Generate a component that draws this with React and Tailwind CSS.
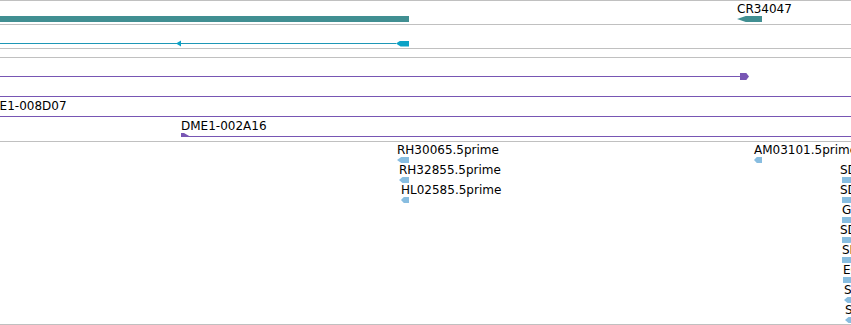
import React from "react";

const leftArrow = "[clip-path:polygon(0_50%,35%_0,100%_0,100%_100%,35%_100%)]";
const rightArrow = "[clip-path:polygon(0_0,70%_0,100%_50%,70%_100%,0_100%)]";

// One glyph on a track row: label on top, then a 7px band for the glyph.
function Feature({ x, w, label, labelClass = "", children }) {
  return (
    <div className="absolute top-0 flex flex-col" style={{ left: x, width: w }}>
      <div className={`mt-[2px] h-[12px] whitespace-nowrap text-[12px] leading-[12px] text-black ${labelClass}`}>
        {label}
      </div>
      <div className="mt-[1px] h-[7px] flex items-center">{children}</div>
    </div>
  );
}

function Row({ children }) {
  return <div className="relative h-[20px] shrink-0">{children}</div>;
}

function Track({ className = "", children }) {
  return (
    <div className={`relative flex flex-col shrink-0 overflow-hidden border-t border-[#c0c0c0] ${className}`}>
      {children}
    </div>
  );
}

// ESTs, grouped by stacking row
const estRows = [
  [
    { name: "RH30065.5prime", x: 397, w: 12, dir: "l" },
    { name: "AM03101.5prime", x: 754, w: 8, dir: "l" },
  ],
  [
    { name: "RH32855.5prime", x: 399, w: 10, dir: "l" },
    { name: "SD09281.5prime", x: 842, w: 14, dir: "r", shift: true },
  ],
  [
    { name: "HL02585.5prime", x: 401, w: 8, dir: "l" },
    { name: "SD24317.5prime", x: 842, w: 14, dir: "r", shift: true },
  ],
  [{ name: "GH13459.5prime", x: 842, w: 14, dir: "r" }],
  [{ name: "SD05962.5prime", x: 842, w: 12, dir: "r", shift: true }],
  [{ name: "SD10573.5prime", x: 842, w: 14, dir: "r" }],
  [{ name: "EC298754.5prime", x: 843, w: 12, dir: "r" }],
  [{ name: "SD07463.5prime", x: 844, w: 10, dir: "l" }],
  [{ name: "SD25873.5prime", x: 845, w: 10, dir: "l" }],
];

export default function App() {
  return (
    <div className="w-[851px] h-[325px] overflow-hidden bg-white flex flex-col font-['DejaVu_Sans',Verdana,sans-serif]">
      {/* gene span */}
      <Track className="h-[24px]">
        <Row>
          <Feature x={0} w={409}>
            <div className="w-full h-[6px] self-start bg-[#418f92]" />
          </Feature>
          <Feature x={737} w={25} label="CR34047">
            <div className={`w-full h-[6px] self-start bg-[#418f92] ${leftArrow}`} />
          </Feature>
        </Row>
      </Track>

      {/* transcript */}
      <Track className="h-[24px]">
        <Row>
          <Feature x={0} w={409}>
            <div className="relative flex-1 h-px bg-[#1e97b6]">
              <svg className="absolute left-[175px] -top-[3px]" width="7" height="7" viewBox="0 0 7 7">
                <polygon points="1,3.5 6,0.5 6,6.5" fill="#0ba2c6" />
              </svg>
            </div>
            <div className={`w-[13px] h-[6px] bg-[#0ba2c6] ${leftArrow}`} />
          </Feature>
        </Row>
      </Track>

      {/* empty track */}
      <Track className="h-[9px]" />

      {/* clones */}
      <Track className="h-[84px]">
        <Row>
          <Feature x={0} w={749}>
            <div className="flex-1 h-px bg-[#7856b4]" />
            <div className={`w-[9px] h-[7px] bg-[#7856b4] ${rightArrow}`} />
          </Feature>
        </Row>
        <Row>
          <Feature x={0} w={851}>
            <div className="flex-1 h-px bg-[#7856b4]" />
          </Feature>
        </Row>
        <Row>
          <Feature x={-20} w={871} label="DME1-008D07">
            <div className="flex-1 h-px bg-[#7856b4]" />
          </Feature>
        </Row>
        <Row>
          <Feature x={181} w={670} label="DME1-002A16">
            <div className="relative flex-1 h-px bg-[#7856b4]">
              <svg className="absolute left-0 -top-[3px]" width="9" height="5" viewBox="0 0 9 5">
                <polygon points="0,0 3,0 9,3.5 9,4 0,4" fill="#7856b4" />
              </svg>
            </div>
          </Feature>
        </Row>
      </Track>

      {/* ESTs */}
      <Track className="h-[184px] border-b">
        {estRows.map((row, i) => (
          <Row key={i}>
            {row.map((f) => (
              <Feature
                key={f.name}
                x={f.x}
                w={f.w}
                label={f.name}
                labelClass={f.shift ? "-ml-[2px]" : ""}
              >
                <div
                  className={`w-full h-[6px] self-start bg-[#88bde0] ${f.dir === "l" ? leftArrow : rightArrow}`}
                />
              </Feature>
            ))}
          </Row>
        ))}
      </Track>
    </div>
  );
}
